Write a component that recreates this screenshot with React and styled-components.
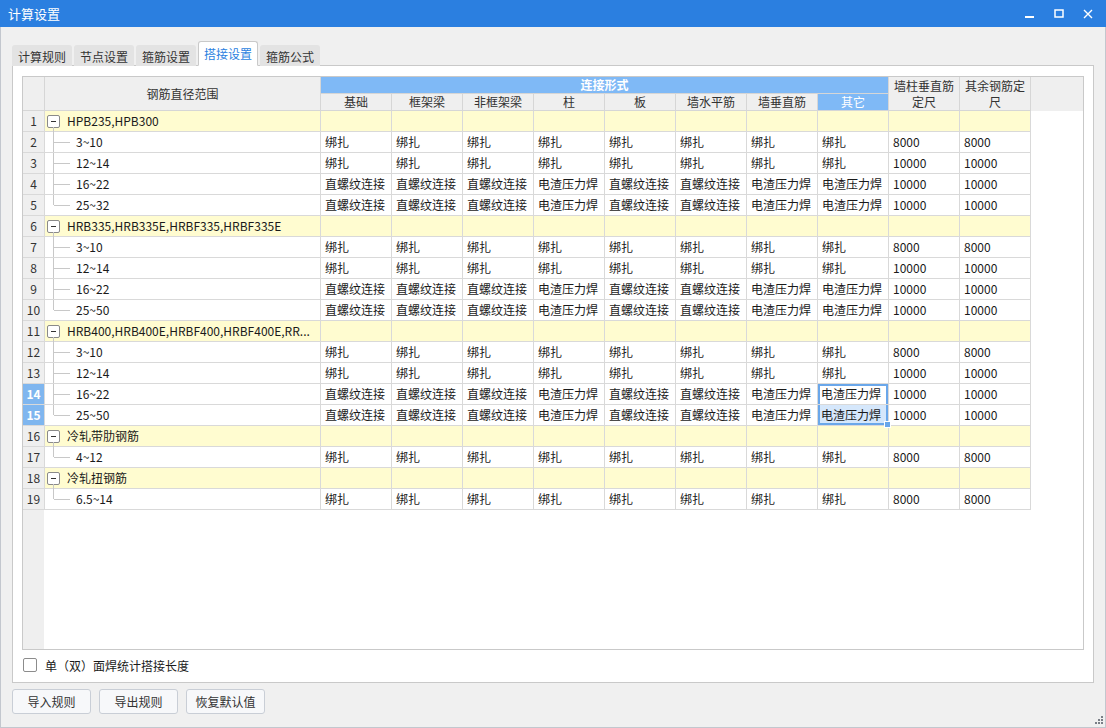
import React from 'react';
import styled, { createGlobalStyle } from 'styled-components';

const GlobalStyle = createGlobalStyle`
    html, body {
        margin: 0;
        padding: 0;
        background: #f0f0f0;
        font-family: "Noto Sans CJK SC", "Noto Sans", sans-serif;
        font-size: 12px;
        color: #1a1a1a;
    }
`;

const Window = styled.div`
    width: 1106px;
    height: 728px;
    box-sizing: border-box;
    border: 1px solid #c3c7ce;
    border-top: none;
    background: #f0f0f0;
    display: flex;
    flex-direction: column;
    position: relative;
`;

const TitleBar = styled.div`
    height: 27px;
    margin: 0 -1px;
    background: #2b7fe0;
    color: #fff;
    display: flex;
    align-items: center;
    padding-left: 8px;
    font-size: 13px;
`;

const TitleText = styled.div`
    flex: 1;
`;

const WinBtn = styled.div`
    width: 29px;
    height: 27px;
    display: flex;
    align-items: center;
    justify-content: center;
`;

const Body = styled.div`
    flex: 1;
    display: flex;
    flex-direction: column;
    padding: 17px 11px 0 11px;
`;

const TabStrip = styled.div`
    display: flex;
    align-items: flex-end;
    gap: 2px;
    height: 22px;
    position: relative;
    z-index: 1;
    margin-bottom: -1px;
`;

const Tab = styled.div`
    height: ${p => (p.active ? '25px' : '21px')};
    box-sizing: border-box;
    padding: 0 5px;
    display: flex;
    align-items: center;
    background: ${p => (p.active ? '#fff' : '#e3e3e3')};
    border: 1px solid ${p => (p.active ? '#c9c9c9' : '#e3e3e3')};
    border-bottom: ${p => (p.active ? '1px solid #fff' : 'none')};
    border-radius: 3px 3px 0 0;
    color: ${p => (p.active ? '#2b7fe0' : '#333')};
    font-size: 12px;
`;

const Panel = styled.div`
    height: 618px;
    box-sizing: border-box;
    background: #fff;
    border: 1px solid #c9c9c9;
    padding: 10px 9px 0 9px;
    display: flex;
    flex-direction: column;
`;

const Grid = styled.div`
    height: 574px;
    box-sizing: border-box;
    border: 1px solid #c9c9c9;
    background: linear-gradient(to right, #efefef 21px, #fff 21px);
    overflow: hidden;
`;

const Table = styled.table`
    border-collapse: separate;
    border-spacing: 0;
    table-layout: fixed;
    width: 100%;
`;

const Th = styled.th`
    height: 16px;
    padding: 0;
    font-weight: ${p => (p.bold ? 'bold' : 'normal')};
    font-size: 12px;
    line-height: 16px;
    color: ${p => (p.hl ? '#fff' : '#333')};
    background: ${p => (p.hl ? '#7fb9f6' : '#efefef')};
    border-right: 1px solid ${p => (p.last ? 'transparent' : '#d6d6d6')};
    border-bottom: 1px solid ${p => (p.last ? 'transparent' : '#d6d6d6')};
    text-align: center;
    vertical-align: middle;
    overflow: hidden;
    white-space: ${p => (p.wrap ? 'normal' : 'nowrap')};
`;

const Td = styled.td`
    height: 20px;
    padding: 0 0 0 4px;
    line-height: 20px;
    border-right: 1px solid #d9d9d9;
    border-bottom: 1px solid #d9d9d9;
    background: ${p => (p.group ? '#fffcd0' : '#fff')};
    white-space: nowrap;
    overflow: hidden;
    position: relative;
    color: #1a1a1a;
`;

const Filler = styled.td`
    padding: 0;
    background: #fff;
`;

const NumCell = styled.td`
    height: 20px;
    padding: 0;
    text-align: center;
    line-height: 20px;
    border-right: 1px solid #d9d9d9;
    border-bottom: 1px solid #d9d9d9;
    background: ${p => (p.sel ? '#7fb6ef' : '#efefef')};
    color: ${p => (p.sel ? '#fff' : '#333')};
    font-weight: ${p => (p.sel ? 'bold' : 'normal')};
`;

const SelCell = styled(Td)`
    background: ${p => (p.bottom ? '#d5e7fb' : '#fff')};
    box-shadow: inset 2px 0 0 #6aa7ea, inset -2px 0 0 #6aa7ea,
        ${p => (p.bottom ? 'inset 0 -2px 0 #6aa7ea' : 'inset 0 2px 0 #6aa7ea')};
    padding-left: 3px;
    overflow: visible;
    &::after {
        content: ${p => (p.bottom ? "''" : 'none')};
        position: absolute;
        right: -3px;
        bottom: -3px;
        width: 5px;
        height: 5px;
        background: #6aa7ea;
        border: 1px solid #fff;
        z-index: 2;
    }
`;

const GroupName = styled(Td)`
    padding-left: 2px;
    overflow: visible;
    &::after {
        content: '';
        position: absolute;
        left: 8px;
        top: 16px;
        bottom: -1px;
        border-left: 1px solid #c8c8c8;
    }
`;

const GroupLabel = styled.div`
    display: flex;
    align-items: center;
    height: 20px;
    gap: 7px;
`;

const ExpandBox = styled.span`
    flex: none;
    display: flex;
    align-items: center;
    justify-content: center;
    width: 11px;
    height: 11px;
    border: 1px solid #8a8a8a;
    border-radius: 2px;
    background: #fff;
    &::before {
        content: '';
        width: 5px;
        height: 0;
        border-top: 1px solid #333;
    }
`;

const ChildName = styled(Td)`
    padding-left: 31px;
    &::before {
        content: '';
        position: absolute;
        left: 8px;
        top: -1px;
        ${p => (p.lastChild ? 'height: 11px;' : 'bottom: -1px;')}
        border-left: 1px solid #c8c8c8;
    }
    &::after {
        content: '';
        position: absolute;
        left: 9px;
        top: 10px;
        width: 16px;
        border-top: 1px solid #c8c8c8;
    }
`;

const OptionRow = styled.label`
    display: flex;
    align-items: center;
    height: 30px;
    padding-left: 1px;
    gap: 8px;
    font-size: 12px;
    color: #1a1a1a;
`;

const CheckBox = styled.span`
    width: 12px;
    height: 12px;
    border: 1px solid #8c8c8c;
    border-radius: 2px;
    background: #fff;
`;

const ButtonRow = styled.div`
    display: flex;
    gap: 8px;
    padding-top: 6px;
`;

const Button = styled.div`
    width: 79px;
    height: 25px;
    box-sizing: border-box;
    border: 1px solid #c9ced6;
    border-radius: 3px;
    background: #f7f8fa;
    display: flex;
    align-items: center;
    justify-content: center;
    color: #333;
    font-size: 12px;
`;

const Grip = styled.svg`
    position: absolute;
    right: 2px;
    bottom: 3px;
`;

const TYPES = ['基础', '框架梁', '非框架梁', '柱', '板', '墙水平筋', '墙垂直筋', '其它'];
const BIND = ['绑扎', '绑扎', '绑扎', '绑扎', '绑扎', '绑扎', '绑扎', '绑扎'];
const WELD = ['直螺纹连接', '直螺纹连接', '直螺纹连接', '电渣压力焊', '直螺纹连接', '直螺纹连接', '电渣压力焊', '电渣压力焊'];

const groups = [
    {
        name: 'HPB235,HPB300',
        rows: [
            ['3~10', BIND, '8000', '8000'],
            ['12~14', BIND, '10000', '10000'],
            ['16~22', WELD, '10000', '10000'],
            ['25~32', WELD, '10000', '10000'],
        ],
    },
    {
        name: 'HRB335,HRB335E,HRBF335,HRBF335E',
        rows: [
            ['3~10', BIND, '8000', '8000'],
            ['12~14', BIND, '10000', '10000'],
            ['16~22', WELD, '10000', '10000'],
            ['25~50', WELD, '10000', '10000'],
        ],
    },
    {
        name: 'HRB400,HRB400E,HRBF400,HRBF400E,RR...',
        rows: [
            ['3~10', BIND, '8000', '8000'],
            ['12~14', BIND, '10000', '10000'],
            ['16~22', WELD, '10000', '10000'],
            ['25~50', WELD, '10000', '10000'],
        ],
    },
    {
        name: '冷轧带肋钢筋',
        rows: [['4~12', BIND, '8000', '8000']],
    },
    {
        name: '冷轧扭钢筋',
        rows: [['6.5~14', BIND, '8000', '8000']],
    },
];

const SELECTED = { 14: 'top', 15: 'bottom' };

function buildRows() {
    const out = [];
    let n = 1;
    groups.forEach(g => {
        out.push(
            <tr key={n}>
                <NumCell>{n}</NumCell>
                <GroupName group>
                    <GroupLabel>
                        <ExpandBox />
                        {g.name}
                    </GroupLabel>
                </GroupName>
                {Array.from({ length: 10 }).map((_, i) => (
                    <Td group key={i} />
                ))}
                <Filler />
            </tr>
        );
        n++;
        g.rows.forEach((r, ri) => {
            const num = n;
            const sel = SELECTED[num];
            out.push(
                <tr key={num}>
                    <NumCell sel={!!sel}>{num}</NumCell>
                    <ChildName lastChild={ri === g.rows.length - 1}>{r[0]}</ChildName>
                    {r[1].map((v, i) =>
                        sel && i === 7 ? (
                            <SelCell key={i} bottom={sel === 'bottom'}>{v}</SelCell>
                        ) : (
                            <Td key={i}>{v}</Td>
                        )
                    )}
                    <Td>{r[2]}</Td>
                    <Td>{r[3]}</Td>
                    <Filler />
                </tr>
            );
            n++;
        });
    });
    return out;
}

export default function App() {
    return (
        <>
            <GlobalStyle />
            <Window>
                <TitleBar>
                    <TitleText>计算设置</TitleText>
                    <WinBtn>
                        <svg width="10" height="10" viewBox="0 0 10 10">
                            <rect x="0" y="7" width="9" height="2" fill="#fff" />
                        </svg>
                    </WinBtn>
                    <WinBtn>
                        <svg width="10" height="10" viewBox="0 0 10 10">
                            <rect x="1" y="1" width="8" height="7" fill="none" stroke="#fff" strokeWidth="1.5" />
                        </svg>
                    </WinBtn>
                    <WinBtn style={{ marginRight: 4 }}>
                        <svg width="10" height="10" viewBox="0 0 10 10">
                            <path d="M1 1 L9 9 M9 1 L1 9" stroke="#fff" strokeWidth="1.4" />
                        </svg>
                    </WinBtn>
                </TitleBar>
                <Body>
                    <TabStrip>
                        <Tab>计算规则</Tab>
                        <Tab>节点设置</Tab>
                        <Tab>箍筋设置</Tab>
                        <Tab active>搭接设置</Tab>
                        <Tab>箍筋公式</Tab>
                    </TabStrip>
                    <Panel>
                        <Grid>
                            <Table>
                                <colgroup>
                                    <col style={{ width: 22 }} />
                                    <col style={{ width: 276 }} />
                                    {Array.from({ length: 10 }).map((_, i) => (
                                        <col key={i} style={{ width: 71 }} />
                                    ))}
                                    <col />
                                </colgroup>
                                <thead>
                                    <tr>
                                        <Th rowSpan={2} />
                                        <Th rowSpan={2}>钢筋直径范围</Th>
                                        <Th colSpan={8} hl bold>连接形式</Th>
                                        <Th rowSpan={2} wrap>墙柱垂直筋定尺</Th>
                                        <Th rowSpan={2} wrap>其余钢筋定尺</Th>
                                        <Th rowSpan={2} last />
                                    </tr>
                                    <tr>
                                        {TYPES.map(t => (
                                            <Th key={t} hl={t === '其它'}>
                                                {t}
                                            </Th>
                                        ))}
                                    </tr>
                                </thead>
                                <tbody>{buildRows()}</tbody>
                            </Table>
                        </Grid>
                        <OptionRow>
                            <CheckBox />
                            单（双）面焊统计搭接长度
                        </OptionRow>
                    </Panel>
                    <ButtonRow>
                        <Button>导入规则</Button>
                        <Button>导出规则</Button>
                        <Button>恢复默认值</Button>
                    </ButtonRow>
                </Body>
                <Grip width="8" height="8" viewBox="0 0 8 8">
                    <rect x="6" y="0" width="2" height="2" fill="#7a7f87" />
                    <rect x="3" y="3" width="2" height="2" fill="#7a7f87" />
                    <rect x="6" y="3" width="2" height="2" fill="#7a7f87" />
                    <rect x="0" y="6" width="2" height="2" fill="#7a7f87" />
                    <rect x="3" y="6" width="2" height="2" fill="#7a7f87" />
                    <rect x="6" y="6" width="2" height="2" fill="#7a7f87" />
                </Grip>
            </Window>
        </>
    );
}
